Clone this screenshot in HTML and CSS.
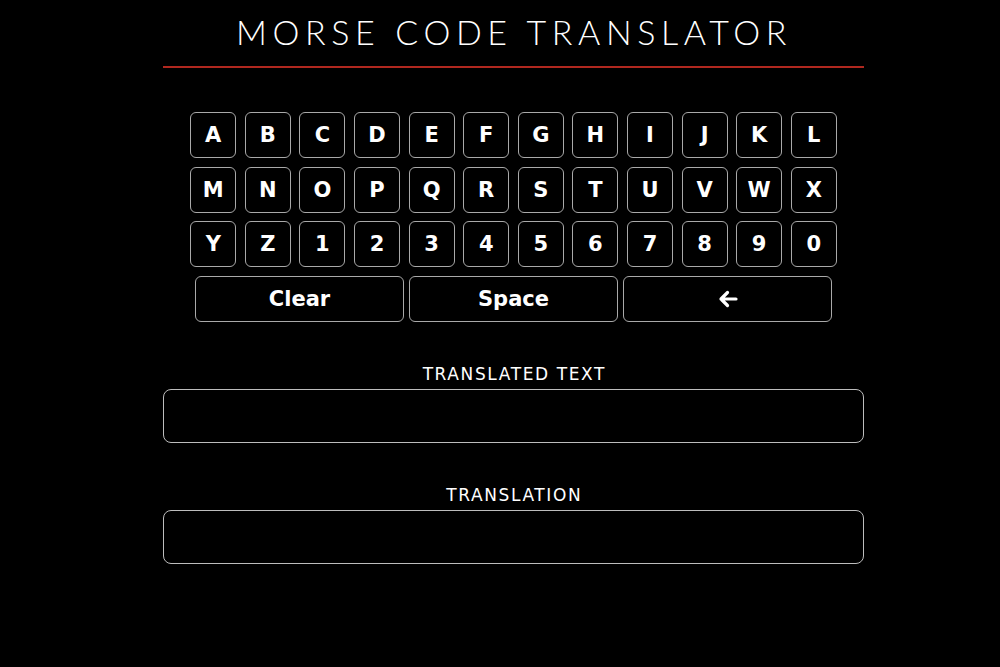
FILE: index.html
```html
<!DOCTYPE html>
<html lang="en">
<head>
<meta charset="utf-8">
<title>Morse Code Translator</title>
<link rel="stylesheet" href="styles.css">
</head>
<body>
<main class="app">
  <h1 class="title">MORSE CODE TRANSLATOR</h1>
  <section class="keyboard">
    <div class="keys">
      <button class="key">A</button><button class="key">B</button><button class="key">C</button><button class="key">D</button><button class="key">E</button><button class="key">F</button><button class="key">G</button><button class="key">H</button><button class="key">I</button><button class="key">J</button><button class="key">K</button><button class="key">L</button>
      <button class="key">M</button><button class="key">N</button><button class="key">O</button><button class="key">P</button><button class="key">Q</button><button class="key">R</button><button class="key">S</button><button class="key">T</button><button class="key">U</button><button class="key">V</button><button class="key">W</button><button class="key">X</button>
      <button class="key">Y</button><button class="key">Z</button><button class="key">1</button><button class="key">2</button><button class="key">3</button><button class="key">4</button><button class="key">5</button><button class="key">6</button><button class="key">7</button><button class="key">8</button><button class="key">9</button><button class="key">0</button>
    </div>
    <div class="actions">
      <button class="key wide">Clear</button>
      <button class="key wide">Space</button>
      <button class="key wide" aria-label="Backspace">
        <svg class="arrow" width="22" height="20" viewBox="0 0 22 20"><path d="M19 10H4M10.5 3.5L4 10l6.5 6.5" fill="none" stroke="#fff" stroke-width="3.2" stroke-linecap="round" stroke-linejoin="round"/></svg>
      </button>
    </div>
  </section>
  <section class="field first">
    <div class="label">TRANSLATED TEXT</div>
    <div class="box"></div>
  </section>
  <section class="field">
    <div class="label">TRANSLATION</div>
    <div class="box"></div>
  </section>
</main>
</body>
</html>
```
FILE: styles.css
```css
html, body {
  margin: 0;
  padding: 0;
  background: #000;
  color: #fff;
}
.app {
  width: 701px;
  margin-left: 163px;
  padding-top: 12px;
}
.title {
  margin: 0;
  font-family: Lato, "Liberation Sans", sans-serif;
  font-weight: 300;
  font-size: 34px;
  line-height: 40px;
  letter-spacing: 5.6px;
  text-align: center;
  padding-bottom: 14px;
  border-bottom: 2px solid #b0281f;
  padding-left: 1px;
}
.keyboard {
  margin-top: 44px;
  display: flex;
  flex-direction: column;
  align-items: center;
  gap: 8.6px;
}
.keys {
  display: grid;
  grid-template-columns: repeat(12, 46px);
  grid-auto-rows: 46px;
  gap: 8.6px;
}
.key {
  box-sizing: border-box;
  background: #000;
  color: #fff;
  border: 1.5px solid #a9a9a9;
  border-radius: 6px;
  font-family: "DejaVu Sans", sans-serif;
  font-weight: 700;
  font-size: 21px;
  padding: 0;
  display: flex;
  align-items: center;
  justify-content: center;
}
.actions {
  display: flex;
  gap: 5px;
}
.wide {
  width: 209px;
  height: 46px;
}
.arrow {
  display: block;
}
.field {
  display: flex;
  flex-direction: column;
  align-items: center;
  margin-top: 41px;
}
.field.first {
  margin-top: 41px;
}
.label {
  font-family: "DejaVu Sans", sans-serif;
  font-size: 17px;
  line-height: 22px;
  letter-spacing: 1.6px;
  padding-left: 1.6px;
  margin-bottom: 4px;
}
.box {
  box-sizing: border-box;
  width: 701px;
  height: 54px;
  border: 1px solid #bdbdbd;
  border-radius: 8px;
}
```
